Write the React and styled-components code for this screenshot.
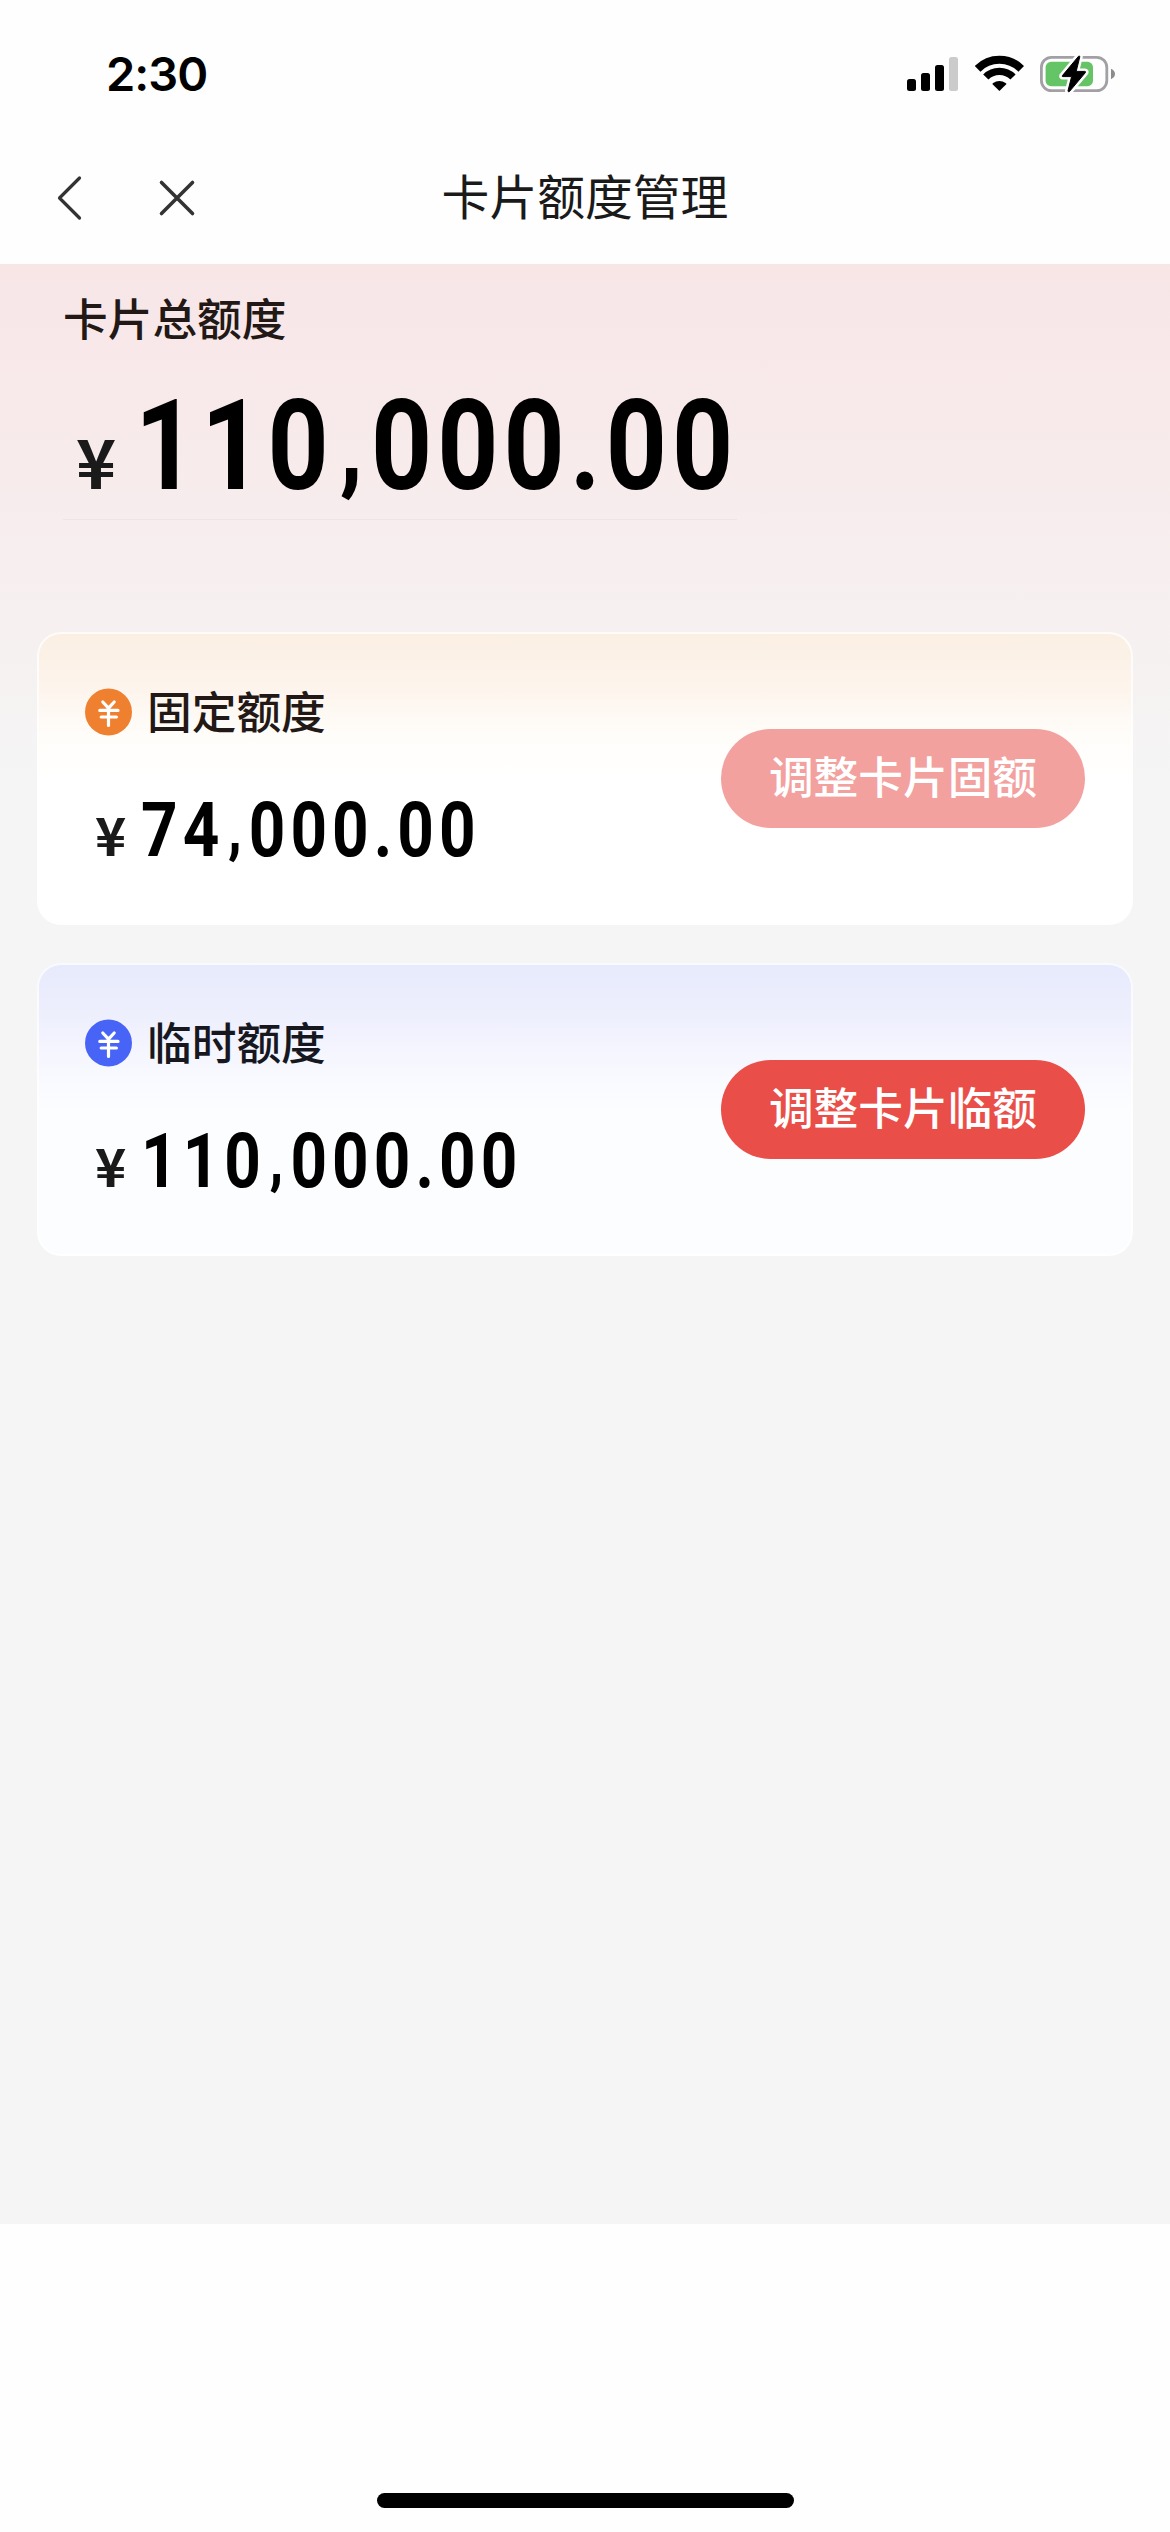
import styled, { createGlobalStyle } from "styled-components";

const GlobalStyle = createGlobalStyle`
  * {
    box-sizing: border-box;
  }
  body {
    margin: 0;
    background-color: #fff;
    font-family: "Noto Sans CJK SC", sans-serif;
  }
`;

const Screen = styled.div`
  width: 1170px;
  height: 2532px;
  display: flex;
  flex-direction: column;
  background-color: #fefefe;
  overflow: hidden;
`;
const StatusBar = styled.div`
  height: 132px;
  padding: 13px 54px 0 106px;
  display: flex;
  align-items: flex-start;
  justify-content: space-between;
`;
const Time = styled.span`
  font-family: Inter, sans-serif;
  font-size: 47px;
  font-weight: 600;
  letter-spacing: -1px;
  line-height: 60px;
  padding-top: 31px;
  color: #000;
`;
const StatusIcons = styled.div`
  display: flex;
  align-items: flex-start;
  gap: 16px;
  padding-top: 41px;
  svg {
    display: block;
  }
`;
const NavBar = styled.header`
  height: 132px;
  padding: 0 54px;
  display: grid;
  grid-template-columns: 300px 1fr 300px;
  align-items: center;
`;
const NavActions = styled.div`
  display: flex;
  align-items: center;
  gap: 70px;
`;
const IconButton = styled.button`
  background-color: transparent;
  border: 0;
  padding: 0;
  cursor: pointer;
  svg {
    display: block;
  }
`;
const Title = styled.h1`
  margin: 0;
  padding-bottom: 6px;
  font-size: 47.8px;
  font-weight: 400;
  line-height: 60px;
  text-align: center;
  color: #1a1a1a;
`;
const Content = styled.main`
  height: 1960px;
  padding: 23px 37px 0;
  background: linear-gradient(180deg, #f8e6e7 0, #f8e9ea 130px, #f5f5f5 520px);
`;
const Total = styled.section`
  width: 700px;
  height: 345px;
  padding-left: 26px;
`;
const TotalLabel = styled.div`
  font-size: 44.7px;
  font-weight: 500;
  line-height: 60px;
  color: #221815;
`;
const TotalAmount = styled.div`
  height: 173px;
  padding: 35px 0 0 13px;
  border-bottom: 1px solid #efe3e5;
`;
const Money = styled.div`
  display: flex;
  align-items: baseline;
  white-space: nowrap;
  line-height: ${props => props.$size}px;
`;
const Yen = styled.span`
  flex: none;
  font-size: ${props => props.$size}px;
  font-weight: 700;
  color: #1a1a1a;
  width: ${props => props.$width}px;
`;
// condensed figures, close to DIN
const Digits = styled.span`
  display: inline-block;
  flex: none;
  font-family: Roboto, sans-serif;
  font-size: ${props => props.$size}px;
  font-weight: 700;
  letter-spacing: ${props => props.$spacing}em;
  color: #000;
  transform: scaleX(0.84);
  transform-origin: left;
`;
const Comma = styled.span`
  padding: 0 0.04em 0 0.07em;
  font-size: 0.8em;
  font-weight: 900;
  line-height: 0;
  vertical-align: 0.08em;
`;
const Cards = styled.div`
  display: flex;
  flex-direction: column;
  gap: 38px;
`;
const Card = styled.section`
  height: 293px;
  padding: 0 46px 0 46px;
  display: flex;
  align-items: center;
  justify-content: space-between;
  border: 2px solid rgba(255, 255, 255, 0.75);
  border-radius: 24px;
  background: ${props => props.$tint};
  background-origin: border-box;
`;
const CardInfo = styled.div`
  height: 100%;
  padding-top: 46px;
`;
const CardLabel = styled.div`
  display: flex;
  align-items: center;
  gap: 14px;
  font-size: 44.7px;
  font-weight: 500;
  line-height: 60px;
  color: ${props => props.$color};
  svg {
    display: block;
    margin-top: 4px;
  }
`;
const CardAmount = styled.div`
  padding: 52px 0 0 10px;
`;
const PillButton = styled.button`
  width: 364px;
  height: 99px;
  border: 0;
  border-radius: 50px;
  padding: 0 0 7px;
  font-family: inherit;
  font-size: 44.7px;
  font-weight: 500;
  line-height: 60px;
  color: #fff;
  background-color: ${props => (props.disabled ? "#f2a19f" : "#ea4e48")};
  cursor: pointer;
`;
const Footer = styled.footer`
  flex: 1;
  display: flex;
  align-items: flex-end;
  justify-content: center;
  padding-bottom: 24px;
`;
const HomeIndicator = styled.div`
  width: 417px;
  height: 15px;
  border-radius: 8px;
  background-color: #000;
`;

function SignalIcon() {
  return (
    <svg width="52" height="38" viewBox="0 0 52 38">
      <rect x="0" y="25" width="9" height="12" rx="2.5" />
      <rect x="14" y="19" width="9" height="18" rx="2.5" />
      <rect x="28" y="11" width="9" height="26" rx="2.5" />
      <rect x="42" y="3" width="9" height="34" rx="2.5" fill="#cbcbcb" />
    </svg>
  );
}

function WifiIcon() {
  return (
    <svg width="49" height="38" viewBox="0 -1 49 38">
      <g fill="none" stroke="#000">
        <path d="M2.6 13.8A30.8 30.8 0 0 1 46.2 13.8" strokeWidth="8" />
        <path d="M10.8 22A19.2 19.2 0 0 1 38 22" strokeWidth="7.4" />
      </g>
      <path d="M24.4 36L17.3 28.9Q17.6 28.5 18.2 28A10.2 10.2 0 0 1 30.6 28Q31.2 28.5 31.5 28.9Z" />
    </svg>
  );
}

function BatteryIcon() {
  const bolt = "M38.6 2.2L22.4 21.6Q21.8 22.6 23 22.6H31.6L28 36.8Q28.2 38.4 29.4 37.6L45.4 18.6Q46 17.4 44.8 17.4H36.2L39.8 2.8Q39.6 1.4 38.6 2.2Z";
  return (
    <svg width="76" height="40" viewBox="0 0 76 40">
      <rect x="1.4" y="3.4" width="65.4" height="33.2" rx="10" fill="none" stroke="#a3a0a5" strokeWidth="2.8" />
      <rect x="5.6" y="7.8" width="47.4" height="24.4" rx="5.5" fill="#65c466" />
      <path d="M71 14.8Q75 16.8 75 20T71 25.2Z" fill="#8e8b90" />
      <path d={bolt} fill="#fff" stroke="#fff" strokeWidth="6" strokeLinejoin="round" />
      <path d={bolt} stroke="#000" strokeWidth="1" strokeLinejoin="round" />
    </svg>
  );
}

function BackIcon() {
  return (
    <svg width="32" height="46" viewBox="0 0 32 46" fill="none" stroke="#333" strokeWidth="3.2" strokeLinecap="round" strokeLinejoin="round">
      <path d="M25.5 3L5.5 23L25.5 43" />
    </svg>
  );
}

function CloseIcon() {
  return (
    <svg width="40" height="40" viewBox="0 0 40 40" fill="none" stroke="#333" strokeWidth="3.6" strokeLinecap="round">
      <path d="M5.5 4.5L36.5 35.5M36.5 4.5L5.5 35.5" />
    </svg>
  );
}

function CoinIcon({ color }) {
  return (
    <svg width="48" height="48" viewBox="0 0 48 48">
      <circle cx="23.5" cy="24" r="23.5" fill={color} />
      <path
        d="M17.8 14L23.5 20.2L29.2 14M14.8 22.4H33M16.2 29H31.4M23.5 20.5V37.5"
        fill="none" stroke="#fff" strokeWidth="3.2" strokeLinecap="round" strokeLinejoin="round"
      />
    </svg>
  );
}

function Amount({ value, size, spacing, yenSize, yenWidth }) {
  const [thousands, rest] = value.split(",");
  return (
    <Money $size={size}>
      <Yen $size={yenSize} $width={yenWidth}>¥</Yen>
      <Digits $size={size} $spacing={spacing}>{thousands}<Comma>,</Comma>{rest}</Digits>
    </Money>
  );
}

const limits = [
  {
    id: "fixed",
    label: "固定额度",
    value: "74,000.00",
    action: "调整卡片固额",
    disabled: true,
    color: "#ee8030",
    textColor: "#221815",
    tint: "linear-gradient(180deg, #fbefe3 0, #fdf4ec 55px, #fffdfa 105px, #fff 150px)",
  },
  {
    id: "temp",
    label: "临时额度",
    value: "110,000.00",
    action: "调整卡片临额",
    disabled: false,
    color: "#4864f6",
    textColor: "#17181f",
    tint: "linear-gradient(180deg, #e6eafc 0, #eeeffd 52px, #f9faff 115px, #fcfdff 150px)",
  },
];

export default function App() {
  return (
    <Screen>
      <GlobalStyle />
      <StatusBar>
        <Time>2:30</Time>
        <StatusIcons>
          <SignalIcon />
          <WifiIcon />
          <BatteryIcon />
        </StatusIcons>
      </StatusBar>
      <NavBar>
        <NavActions>
          <IconButton aria-label="返回"><BackIcon /></IconButton>
          <IconButton aria-label="关闭"><CloseIcon /></IconButton>
        </NavActions>
        <Title>卡片额度管理</Title>
      </NavBar>
      <Content>
        <Total>
          <TotalLabel>卡片总额度</TotalLabel>
          <TotalAmount>
            <Amount value="110,000.00" size={127} spacing={0.047} yenSize={68} yenWidth={59} />
          </TotalAmount>
        </Total>
        <Cards>
          {limits.map(item => (
            <Card key={item.id} $tint={item.tint}>
              <CardInfo>
                <CardLabel $color={item.textColor}>
                  <CoinIcon color={item.color} />
                  {item.label}
                </CardLabel>
                <CardAmount>
                  <Amount value={item.value} size={76} spacing={0.079} yenSize={53} yenWidth={46} />
                </CardAmount>
              </CardInfo>
              <PillButton disabled={item.disabled}>{item.action}</PillButton>
            </Card>
          ))}
        </Cards>
      </Content>
      <Footer>
        <HomeIndicator />
      </Footer>
    </Screen>
  );
}
